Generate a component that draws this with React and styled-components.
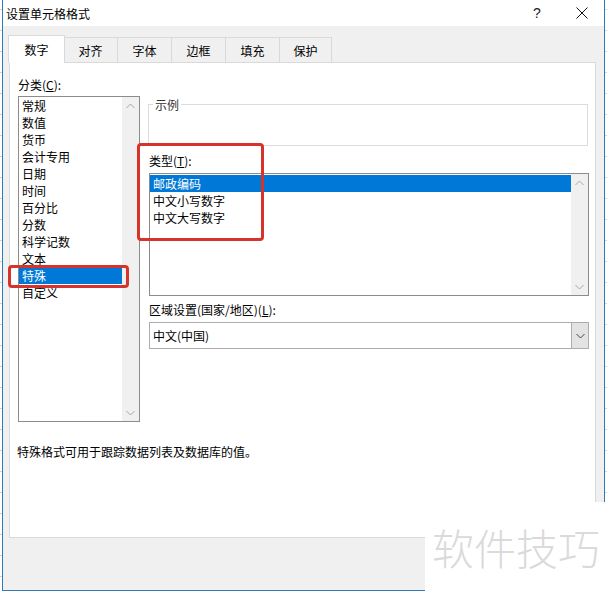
import React from 'react';
import styled, { createGlobalStyle, css } from 'styled-components';

const Global = createGlobalStyle`
  html, body { margin: 0; padding: 0; background: #fff; }
  body {
    font-family: "Noto Sans CJK SC", "Noto Sans", sans-serif;
    font-size: 12px;
    color: #000;
  }
`;

const Screen = styled.div`
  position: relative;
  width: 607px;
  height: 593px;
  overflow: hidden;
  background: repeating-linear-gradient(to bottom, #fff 0 9px, #d4d4d4 9px 10px, #fff 10px 21px);
`;

const Window = styled.div`
  margin-left: 2px;
  width: 603px;
  height: 591px;
  box-sizing: border-box;
  border: 1px solid #2f7bb5;
  border-top: none;
  background: #f0f0f0;
  display: flex;
  flex-direction: column;
`;

const TitleBar = styled.div`
  height: 26px;
  flex: none;
  background: #fff;
  display: flex;
  align-items: center;
  padding-left: 3px;
`;

const Title = styled.div`
  flex: 1;
  font-size: 12px;
  line-height: 17px;
  color: #000;
`;

const CaptionButton = styled.div`
  width: ${p => p.$w}px;
  height: 26px;
  display: flex;
  align-items: center;
  justify-content: center;
  font-family: "Liberation Sans", sans-serif;
  font-size: 14px;
  color: #222;
`;

const Body = styled.div`
  flex: 1;
  display: flex;
  flex-direction: column;
  padding: 11px 0 0 6px;
`;

const TabStrip = styled.div`
  display: flex;
  height: 25px;
  align-items: flex-start;
`;

const Tab = styled.div`
  box-sizing: border-box;
  width: ${p => p.$w}px;
  height: 25px;
  margin-left: -1px;
  border: 1px solid #d9d9d9;
  border-bottom: none;
  background: #f0f0f0;
  display: flex;
  align-items: center;
  justify-content: center;
  font-size: 12px;
  padding-top: 1px;
  ${p => p.$active && css`
    position: relative;
    z-index: 1;
    width: ${p.$w + 2}px;
    height: 28px;
    margin: -2px -1px 0 -1px;
    background: #fff;
    padding-top: 0;
  `}
`;

const Panel = styled.div`
  position: relative;
  box-sizing: border-box;
  width: 587px;
  height: 476px;
  border: 1px solid #d9d9d9;
  background: #fff;
  padding: 13px 0 0 8px;
  display: flex;
  flex-direction: column;
`;

const Columns = styled.div`
  display: flex;
  align-items: flex-start;
  gap: 9px;
`;

const LeftCol = styled.div`
  width: 122px;
  display: flex;
  flex-direction: column;
`;

const RightCol = styled.div`
  width: 440px;
  margin-top: 20px;
  display: flex;
  flex-direction: column;
`;

const Label = styled.div`
  line-height: 17px;
  height: 17px;
  margin-top: ${p => p.$mt || 0}px;
  white-space: nowrap;
`;

const ListBox = styled.div`
  box-sizing: border-box;
  width: ${p => p.$w}px;
  height: ${p => p.$h}px;
  margin-top: ${p => p.$mt || 0}px;
  border: 1px solid #8c8c8c;
  display: flex;
  background: #fff;
`;

const Items = styled.div`
  flex: 1;
  padding-top: ${p => p.$pt || 0}px;
`;

const Item = styled.div`
  height: 17px;
  line-height: 17px;
  padding-left: 3px;
  white-space: nowrap;
  ${p => p.$selected && css`
    background: #0078d7;
    color: #fff;
  `}
`;

const Scrollbar = styled.div`
  width: 17px;
  background: #f0f0f0;
  display: flex;
  flex-direction: column;
  justify-content: space-between;
`;

const ArrowBox = styled.div`
  height: 17px;
  display: flex;
  align-items: center;
  justify-content: center;
`;

const GroupBox = styled.div`
  position: relative;
  box-sizing: border-box;
  margin: 8px 0 0 -1px;
  width: 440px;
  height: 42px;
  border: 1px solid #dcdcdc;
`;

const Legend = styled.span`
  position: absolute;
  top: -9px;
  left: 4px;
  padding: 0 2px;
  background: #fff;
  line-height: 17px;
  color: #333;
`;

const Select = styled.div`
  box-sizing: border-box;
  margin-top: 4px;
  width: 440px;
  height: 27px;
  border: 1px solid #acacac;
  display: flex;
  align-items: stretch;
`;

const SelectValue = styled.div`
  flex: 1;
  display: flex;
  align-items: center;
  padding-left: 3px;
`;

const DropButton = styled.div`
  width: 16px;
  background: #e3e3e3;
  border-left: 1px solid #acacac;
  display: flex;
  align-items: center;
  justify-content: center;
`;

const Description = styled.div`
  margin: 21px 0 0 -1px;
  line-height: 17px;
`;

const RedMark = styled.div`
  position: absolute;
  box-sizing: border-box;
  left: ${p => p.$x}px;
  top: ${p => p.$y}px;
  width: ${p => p.$w}px;
  height: ${p => p.$h}px;
  border: 3px solid #d6332d;
  border-radius: 4px;
  pointer-events: none;
`;

const Watermark = styled.div`
  position: absolute;
  left: 425px;
  top: 502px;
  width: 182px;
  height: 91px;
  background: #fff;
  display: flex;
  align-items: flex-start;
  padding: 20px 0 0 7px;
  box-sizing: border-box;
  font-size: 42px;
  line-height: 50px;
  font-weight: 300;
  color: #dadada;
  letter-spacing: 0;
  white-space: nowrap;
`;

const Chevron = ({ up, color = '#a6a6a6' }) => (
  <svg width="9" height="6" viewBox="0 0 9 6">
    <polyline
      points={up ? '0.5,5 4.5,1 8.5,5' : '0.5,1 4.5,5 8.5,1'}
      fill="none"
      stroke={color}
      strokeWidth="1"
    />
  </svg>
);

const tabs = [
  { label: '数字', w: 55, active: true },
  { label: '对齐', w: 55 },
  { label: '字体', w: 55 },
  { label: '边框', w: 55 },
  { label: '填充', w: 55 },
  { label: '保护', w: 53 },
];

const categories = ['常规', '数值', '货币', '会计专用', '日期', '时间', '百分比', '分数', '科学记数', '文本', '特殊', '自定义'];
const types = ['邮政编码', '中文小写数字', '中文大写数字'];

export default function App() {
  return (
    <Screen>
      <Global />
      <Window>
        <TitleBar>
          <Title>设置单元格格式</Title>
          <CaptionButton $w={44}>?</CaptionButton>
          <CaptionButton $w={45}>
            <svg width="12" height="12" viewBox="0 0 12 12">
              <path d="M0.5 0.5 L11.5 11.5 M11.5 0.5 L0.5 11.5" stroke="#111" strokeWidth="1" />
            </svg>
          </CaptionButton>
        </TitleBar>
        <Body>
          <TabStrip>
            {tabs.map(t => (
              <Tab key={t.label} $w={t.w} $active={t.active}>{t.label}</Tab>
            ))}
          </TabStrip>
          <Panel>
            <Columns>
              <LeftCol>
                <Label>分类(<u>C</u>):</Label>
                <ListBox $w={122} $h={326} $mt={3}>
                  <Items>
                    {categories.map(c => (
                      <Item key={c} $selected={c === '特殊'}>{c}</Item>
                    ))}
                  </Items>
                  <Scrollbar>
                    <ArrowBox><Chevron up /></ArrowBox>
                    <ArrowBox><Chevron /></ArrowBox>
                  </Scrollbar>
                </ListBox>
              </LeftCol>
              <RightCol>
                <GroupBox>
                  <Legend>示例</Legend>
                </GroupBox>
                <Label $mt={6}>类型(<u>T</u>):</Label>
                <ListBox $w={440} $h={123} $mt={4}>
                  <Items $pt={1}>
                    {types.map((t, i) => (
                      <Item key={t} $selected={i === 0}>{t}</Item>
                    ))}
                  </Items>
                  <Scrollbar>
                    <ArrowBox><Chevron up /></ArrowBox>
                    <ArrowBox><Chevron /></ArrowBox>
                  </Scrollbar>
                </ListBox>
                <Label $mt={5}>区域设置(国家/地区)(<u>L</u>):</Label>
                <Select>
                  <SelectValue>中文(中国)</SelectValue>
                  <DropButton><Chevron color="#444" /></DropButton>
                </Select>
              </RightCol>
            </Columns>
            <Description>特殊格式可用于跟踪数据列表及数据库的值。</Description>
            <RedMark $x={-2} $y={202} $w={121} $h={23} />
            <RedMark $x={127} $y={80} $w={127} $h={98} />
          </Panel>
        </Body>
      </Window>
      <Watermark>软件技巧</Watermark>
    </Screen>
  );
}
